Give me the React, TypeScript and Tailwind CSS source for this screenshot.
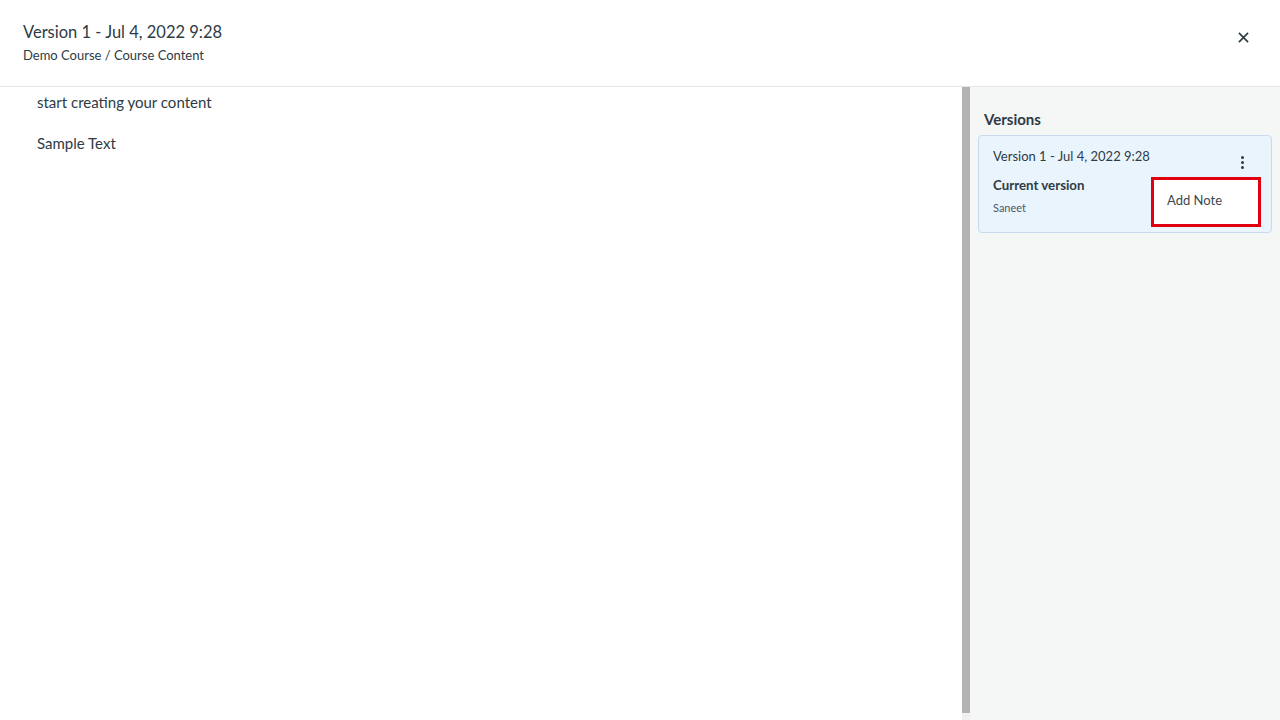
export default function App() {
  return (
    <div className="flex h-[720px] w-[1280px] flex-col overflow-hidden bg-white text-[#2d3b45] font-['Lato','Liberation_Sans',sans-serif]">
      <header className="flex h-[87px] shrink-0 items-start justify-between border-b border-[#e3e5e6] pl-[23px] pr-[31px] pt-[21px]">
        <div>
          <h1 className="text-[16.5px] leading-[22px]">Version 1 - Jul 4, 2022 9:28</h1>
          <p className="mt-[3px] text-[13px] leading-[18px]">Demo Course / Course Content</p>
        </div>
        <button className="mt-[11px] text-[#2d3b45]">
          <svg width="11" height="11" viewBox="0 0 12 12" fill="none" stroke="currentColor" strokeWidth="1.8">
            <path d="M1 1l10 10M11 1L1 11" />
          </svg>
        </button>
      </header>

      <div className="flex min-h-0 flex-1">
        <main className="w-[962px] shrink-0 pl-[37px] pt-[5px] text-[15px]">
          <p className="leading-[20px]">start creating your content</p>
          <p className="mt-[21px] leading-[20px]">Sample Text</p>
        </main>

        <div className="flex w-[8px] shrink-0 flex-col bg-[#f0f0f0]">
          <div className="h-[626px] bg-[#b3b3b3]" />
        </div>

        <aside className="flex-1 bg-[#f5f6f6] px-[8px] pt-[23px]">
          <h2 className="pl-[6px] text-[15px] font-bold leading-[18px]">Versions</h2>
          <div className="relative mt-[7px] h-[98px] rounded-[4px] border border-[#c7dbec] bg-[#eaf4fd] pl-[14px] pt-[11px]">
            <div className="text-[13px] leading-[18px]">Version 1 - Jul 4, 2022 9:28</div>
            <div className="mt-[12px] text-[13.3px] font-bold leading-[16px]">Current version</div>
            <div className="mt-[8px] text-[11px] leading-[14px] text-[#4a5760]">Saneet</div>
            <button className="absolute right-[27px] top-[20px] flex flex-col gap-[2px]">
              <span className="h-[3px] w-[3px] rounded-full bg-[#2d3b45]" />
              <span className="h-[3px] w-[3px] rounded-full bg-[#2d3b45]" />
              <span className="h-[3px] w-[3px] rounded-full bg-[#2d3b45]" />
            </button>
            <div className="absolute left-[172px] top-[41px] flex h-[50px] w-[110px] items-center border-[3px] border-[#e0000f] bg-white pl-[13px] pb-[2px] text-[13px] text-[#3d4850]">
              Add Note
            </div>
          </div>
        </aside>
      </div>
    </div>
  );
}
